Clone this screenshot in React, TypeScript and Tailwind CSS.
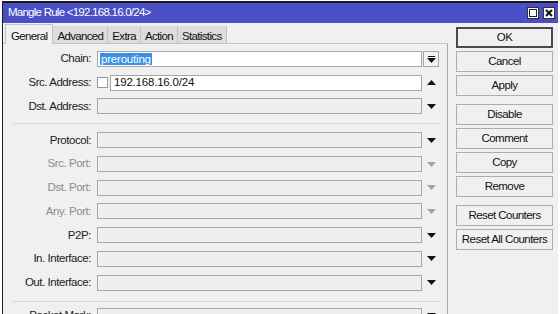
import React from 'react';

const FONT = { fontFamily: '"Liberation Sans", Arial, sans-serif' };

type Row = { label: string; dim?: boolean; arrow: 'down' | 'up' | 'combo'; arrowDim?: boolean; white?: boolean; value?: string; check?: boolean; selected?: boolean };

const TOP_ROWS: Row[] = [
  { label: 'Chain:', arrow: 'combo', white: true, value: 'prerouting', selected: true },
  { label: 'Src. Address:', arrow: 'up', white: true, value: '192.168.16.0/24', check: true },
  { label: 'Dst. Address:', arrow: 'down' },
];

const MID_ROWS: Row[] = [
  { label: 'Protocol:', arrow: 'down' },
  { label: 'Src. Port:', arrow: 'down', dim: true, arrowDim: true },
  { label: 'Dst. Port:', arrow: 'down', dim: true, arrowDim: true },
  { label: 'Any. Port:', arrow: 'down', dim: true, arrowDim: true },
  { label: 'P2P:', arrow: 'down' },
  { label: 'In. Interface:', arrow: 'down' },
  { label: 'Out. Interface:', arrow: 'down' },
];

const TABS = ['General', 'Advanced', 'Extra', 'Action', 'Statistics'];

const BUTTON_GROUPS = [
  ['OK', 'Cancel', 'Apply'],
  ['Disable', 'Comment', 'Copy', 'Remove'],
  ['Reset Counters', 'Reset All Counters'],
];

function Tri({ up, dim }: { up?: boolean; dim?: boolean }) {
  return (
    <svg width="9" height="5" viewBox="0 0 9 5" className={dim ? 'text-[#a3a3a3]' : 'text-[#111]'}>
      <path d={up ? 'M0 5 L4.5 0 L9 5 Z' : 'M0 0 L9 0 L4.5 5 Z'} fill="currentColor" />
    </svg>
  );
}

function FormRow({ row }: { row: Row }) {
  return (
    <div className="flex items-center h-4">
      <div className={`w-[94px] pr-[6px] text-right text-[11.5px] tracking-[-0.45px] ${row.dim ? 'text-[#8c8c8c]' : 'text-[#222]'}`}>
        {row.label}
      </div>
      {row.check && <div className="w-[11px] h-[11px] border border-[#9a9a9a] bg-white mr-[2px]" />}
      <div
        className={`h-4 border border-[#a6a6a6] flex items-center pl-[2px] text-[11.5px] tracking-[-0.2px] ${row.white ? 'bg-white' : 'bg-[#efefef]'} ${row.check ? 'w-[312px]' : 'w-[325px]'}`}
      >
        {row.value && (
          <span className={row.selected ? 'bg-[#3b8fe5] text-white leading-[12px] px-[1px]' : 'text-[#111] pl-[1px]'}>{row.value}</span>
        )}
      </div>
      <div className="w-[18px] flex items-center justify-center">
        {row.arrow === 'combo' ? (
          <div className="w-4 h-4 border border-[#a6a6a6] bg-[#f3f3f3] flex flex-col items-center justify-center gap-[1px]">
            <div className="w-[7px] h-[1px] bg-[#111]" />
            <Tri />
          </div>
        ) : (
          <Tri up={row.arrow === 'up'} dim={row.arrowDim} />
        )}
      </div>
    </div>
  );
}

export default function App() {
  return (
    <div className="w-[560px] h-[314px] bg-white overflow-hidden" style={FONT}>
      <div className="ml-[2px] mt-[1px] w-[556px] h-[320px] border-l border-t-2 border-[#1c1c1c] bg-[#f0f0f0]">
        <div className="h-[20px] bg-[#4a4fc6] flex items-center justify-between pl-[5px] pr-[3px]">
          <span className="text-white text-[11.5px] tracking-[-0.75px]">Mangle Rule &lt;192.168.16.0/24&gt;</span>
          <div className="flex gap-[4px]">
            <div className="w-[12px] h-[12px] bg-white border border-[#333] flex items-center justify-center">
              <div className="w-[8px] h-[8px] border border-[#222]" />
            </div>
            <div className="w-[12px] h-[12px] bg-white border border-[#333] flex items-center justify-center">
              <svg width="8" height="8" viewBox="0 0 8 8">
                <path d="M1 1 L7 7 M7 1 L1 7" stroke="#111" strokeWidth="2" />
              </svg>
            </div>
          </div>
        </div>

        <div className="flex">
          <div className="w-[445px]">
            <div className="flex items-end h-[21px] pl-[2px] border-b border-[#c4c4c4]">
              {TABS.map((t, i) => (
                <div
                  key={t}
                  className={`px-[4px] text-[11.5px] tracking-[-0.65px] text-[#111] border-r border-[#c2c2c2] ${
                    i === 0 ? 'h-[20px] pt-[3px] px-[5px] bg-[#f0f0f0] border-l border-t -mb-[1px]' : 'h-[17px] pt-[2px] bg-[#dcdcdc]'
                  }`}
                >
                  {t}
                </div>
              ))}
            </div>
            <div className="border-r border-[#a9a9a9] h-[280px] pt-[7px]">
              <div className="flex flex-col gap-[7.7px]">
                {TOP_ROWS.map((r) => <FormRow key={r.label} row={r} />)}
              </div>
              <div className="h-[1px] bg-[#d6d6d6] ml-[10px] mr-[7px] mt-[8.5px] mb-[8.5px]" />
              <div className="flex flex-col gap-[7.7px]">
                {MID_ROWS.map((r) => <FormRow key={r.label} row={r} />)}
              </div>
              <div className="h-[1px] bg-[#d6d6d6] ml-[10px] mr-[7px] mt-[10px] mb-[6px]" />
              <FormRow row={{ label: 'Packet Mark:', arrow: 'down' }} />
            </div>
          </div>

          <div className="pl-[8px] pt-[4px] flex flex-col gap-[8px]">
            {BUTTON_GROUPS.map((g, gi) => (
              <div key={gi} className="flex flex-col gap-[3px]">
                {g.map((b) => (
                  <div
                    key={b}
                    className={`w-[97px] h-[21px] flex items-center justify-center text-[11.5px] tracking-[-0.55px] text-[#111] bg-[#f0f0f0] ${
                      b === 'OK' ? 'border-2 border-[#4a4a4a]' : 'border border-[#adadad]'
                    }`}
                  >
                    {b}
                  </div>
                ))}
              </div>
            ))}
          </div>
        </div>
      </div>
    </div>
  );
}
